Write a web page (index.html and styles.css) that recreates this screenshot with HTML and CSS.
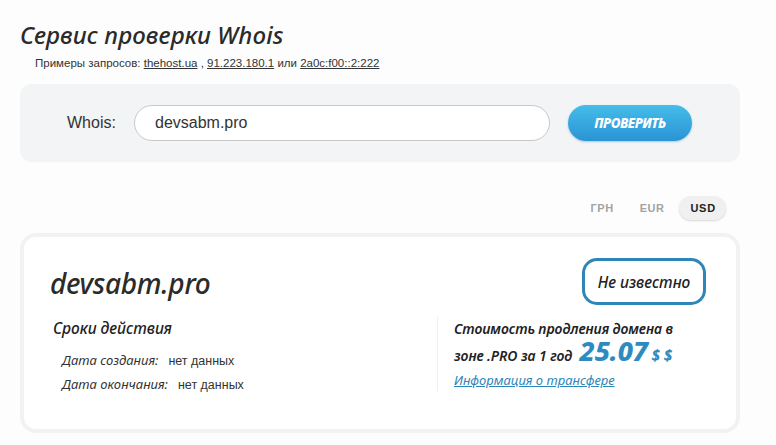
FILE: index.html
```html
<!DOCTYPE html>
<html lang="ru">
<head>
<meta charset="utf-8">
<link rel="stylesheet" href="styles.css">
</head>
<body>
<div class="page">
  <h1 class="title">Сервис проверки Whois</h1>
  <div class="examples">Примеры запросов: <a href="#">thehost.ua</a> , <a href="#">91.223.180.1</a> или <a href="#">2a0c:f00::2:222</a></div>
  <form class="search">
    <label class="search-label">Whois:</label>
    <div class="search-input">devsabm.pro</div>
    <button type="button" class="search-btn">ПРОВЕРИТЬ</button>
  </form>
  <div class="currencies">
    <span class="cur">ГРН</span>
    <span class="cur">EUR</span>
    <span class="cur active">USD</span>
  </div>
  <div class="card">
    <div class="card-head">
      <div class="domain">devsabm.pro</div>
      <div class="status">Не известно</div>
    </div>
    <div class="card-body">
      <div class="col-left">
        <div class="sub">Сроки действия</div>
        <div class="row"><span class="key">Дата создания:</span><span class="val">нет данных</span></div>
        <div class="row"><span class="key">Дата окончания:</span><span class="val">нет данных</span></div>
      </div>
      <div class="col-right">
        <div class="price-text">Стоимость продления домена в<br>зоне .PRO за 1 год <span class="price">25.07</span> <span class="cur-sign">$ $</span></div>
        <a href="#" class="transfer">Информация о трансфере</a>
      </div>
    </div>
  </div>
</div>
</body>
</html>
```
FILE: styles.css
```css
html, body {
  margin: 0;
  padding: 0;
  background: #fdfdfd;
}
body {
  font-family: "Liberation Sans", Arial, sans-serif;
  color: #333;
}
.page {
  width: 720px;
  padding: 19px 36px 0 20px;
}
.title {
  margin: 0;
  font-family: "Noto Sans", sans-serif;
  font-style: italic;
  font-weight: 500;
  font-size: 24px;
  line-height: 32px;
  color: #2b2b2b;
  letter-spacing: 0.1px;
}
.examples {
  margin: 5px 0 0 15px;
  font-size: 11.5px;
  line-height: 14px;
  color: #333;
}
.examples a {
  color: #333;
  text-decoration: underline;
}
.search {
  margin: 14px 0 0 0;
  height: 78px;
  box-sizing: border-box;
  background: #f2f4f6;
  border-radius: 12px;
  display: flex;
  align-items: center;
  padding: 0 0 0 47px;
}
.search-label {
  font-size: 16px;
  color: #333;
  width: 67px;
}
.search-input {
  width: 416px;
  height: 36px;
  box-sizing: border-box;
  border: 1px solid #c8c8c8;
  border-radius: 18px;
  background: #fff;
  font-size: 16px;
  line-height: 34px;
  padding-left: 20px;
  color: #333;
}
.search-btn {
  margin-left: 18px;
  width: 124px;
  height: 36px;
  border: none;
  border-radius: 18px;
  background: linear-gradient(#46bdea, #2a93d4);
  box-shadow: 0 1px 2px rgba(40, 120, 180, 0.35);
  color: #fff;
  font-family: "Noto Sans", sans-serif;
  font-style: italic;
  font-weight: 800;
  font-size: 13.5px;
  letter-spacing: -0.4px;
  padding: 0;
}
.currencies {
  margin-top: 34px;
  display: flex;
  justify-content: flex-end;
  align-items: center;
  padding-right: 14px;
  height: 24px;
}
.cur {
  font-size: 11px;
  font-weight: bold;
  color: #a3a3a3;
  letter-spacing: 0.5px;
  padding: 0 13px;
  line-height: 24px;
}
.cur.active {
  color: #222;
  background: #f0f0f0;
  border-radius: 12px;
  box-shadow: 0 1px 2px rgba(0,0,0,0.15);
  padding: 0 10px 0 11px;
  margin-left: 2px;
  letter-spacing: 0.8px;
}
.card {
  margin-top: 13px;
  height: 200px;
  box-sizing: border-box;
  border: 4px solid #f2f2f2;
  border-radius: 16px;
  background: #fff;
  padding: 21px 30px 0 26px;
}
.card-head {
  display: flex;
  justify-content: space-between;
  align-items: flex-start;
}
.domain {
  font-family: "Noto Sans", sans-serif;
  font-style: italic;
  font-weight: 500;
  font-size: 28px;
  line-height: 38px;
  margin-top: 6px;
  color: #2b2b2b;
  letter-spacing: -0.3px;
}
.status {
  width: 124px;
  height: 47px;
  box-sizing: border-box;
  border: 3px solid #2e86b8;
  border-radius: 15px;
  font-family: "Noto Sans", sans-serif;
  font-style: italic;
  font-weight: 500;
  font-size: 15.5px;
  display: flex;
  align-items: center;
  justify-content: center;
  color: #222;
}
.card-body {
  display: flex;
  margin-top: 12px;
}
.col-left {
  width: 384px;
  padding-left: 3px;
}
.sub {
  font-family: "Noto Sans", sans-serif;
  font-style: italic;
  font-weight: 500;
  font-size: 15.5px;
  line-height: 22px;
  color: #222;
}
.row {
  margin-left: 9px;
  font-size: 12.5px;
  line-height: 23px;
}
.sub + .row { margin-top: 10px; }
.key {
  font-family: "Noto Sans", sans-serif;
  font-style: italic;
  font-size: 13px;
  color: #333;
  margin-right: 10px;
}
.val {
  color: #333;
}
.col-right {
  border-left: 1px solid #f0f0f0;
  padding-left: 16px;
  height: 74px;
}
.price-text {
  font-family: "Noto Sans", sans-serif;
  font-style: italic;
  font-weight: 600;
  font-size: 14px;
  line-height: 24px;
  color: #222;
  letter-spacing: -0.1px;
}
.price {
  font-size: 27px;
  font-weight: 800;
  color: #2e8bc0;
  line-height: 20px;
  margin-left: 4px;
}
.cur-sign {
  font-size: 15px;
  font-weight: 800;
  color: #2e8bc0;
}
.transfer {
  display: block;
  margin-top: 3px;
  font-family: "Noto Sans", sans-serif;
  font-style: italic;
  font-size: 13px;
  color: #2e86b8;
  text-decoration: underline;
  line-height: 18px;
}
```
